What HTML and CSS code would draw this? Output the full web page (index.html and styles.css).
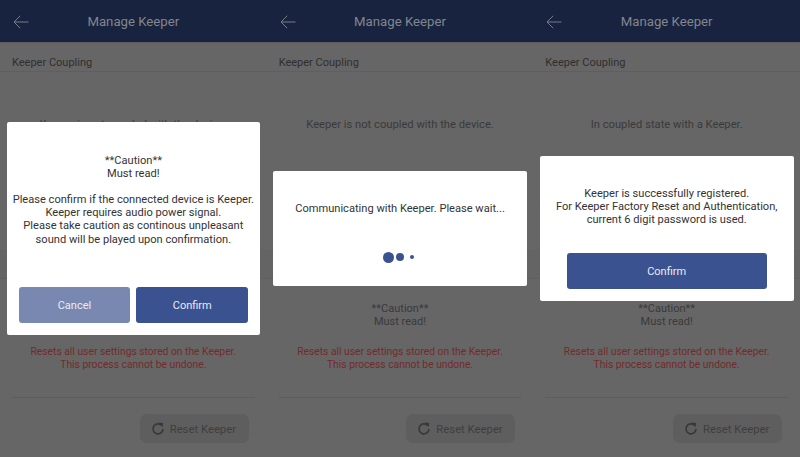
FILE: index.html
```html
<!DOCTYPE html>
<html lang="en">
<head>
<meta charset="utf-8">
<title>Manage Keeper</title>
<link rel="stylesheet" href="styles.css">
</head>
<body>
<main class="screens">
  <section class="phone">
    <header class="topbar">
      <svg class="back" viewBox="0 0 16 14" width="16" height="14"><path d="M15.5 7H1M7.2 .8 1 7l6.2 6.2"/></svg>
      <h1>Manage Keeper</h1>
    </header>
    <h2 class="section-title">Keeper Coupling</h2>
    <p class="status">Keeper is not coupled with the device.</p>
    <div class="band"></div>
    <p class="caution">**Caution**<br>Must read!</p>
    <p class="warning">Resets all user settings stored on the Keeper.<br>This process cannot be undone.</p>
    <hr class="rule">
    <div class="actions">
      <button class="reset"><svg class="refresh" viewBox="0 0 14 14" width="14" height="14"><path d="M10.6 3.4A5 5 0 1 0 12 7"/><path class="fill" d="M7.6 .6 12 .9l-.3 4.4z"/></svg>Reset Keeper</button>
    </div>
    <div class="backdrop">
      <div class="modal modal-caution">
        <p class="modal-text">**Caution**<br>Must read!<br><br>Please confirm if the connected device is Keeper.<br>Keeper requires audio power signal.<br>Please take caution as continous unpleasant<br>sound will be played upon confirmation.</p>
        <div class="modal-buttons">
          <button class="btn btn-muted">Cancel</button>
          <button class="btn">Confirm</button>
        </div>
      </div>
    </div>
  </section>

  <section class="phone">
    <header class="topbar">
      <svg class="back" viewBox="0 0 16 14" width="16" height="14"><path d="M15.5 7H1M7.2 .8 1 7l6.2 6.2"/></svg>
      <h1>Manage Keeper</h1>
    </header>
    <h2 class="section-title">Keeper Coupling</h2>
    <p class="status">Keeper is not coupled with the device.</p>
    <div class="band"></div>
    <p class="caution">**Caution**<br>Must read!</p>
    <p class="warning">Resets all user settings stored on the Keeper.<br>This process cannot be undone.</p>
    <hr class="rule">
    <div class="actions">
      <button class="reset"><svg class="refresh" viewBox="0 0 14 14" width="14" height="14"><path d="M10.6 3.4A5 5 0 1 0 12 7"/><path class="fill" d="M7.6 .6 12 .9l-.3 4.4z"/></svg>Reset Keeper</button>
    </div>
    <div class="backdrop">
      <div class="modal modal-wait">
        <p class="modal-text">Communicating with Keeper. Please wait...</p>
        <div class="dots"><span class="dot dot-l"></span><span class="dot dot-m"></span><span class="dot dot-s"></span></div>
      </div>
    </div>
  </section>

  <section class="phone">
    <header class="topbar">
      <svg class="back" viewBox="0 0 16 14" width="16" height="14"><path d="M15.5 7H1M7.2 .8 1 7l6.2 6.2"/></svg>
      <h1>Manage Keeper</h1>
    </header>
    <h2 class="section-title">Keeper Coupling</h2>
    <p class="status">In coupled state with a Keeper.</p>
    <div class="band"></div>
    <p class="caution">**Caution**<br>Must read!</p>
    <p class="warning">Resets all user settings stored on the Keeper.<br>This process cannot be undone.</p>
    <hr class="rule">
    <div class="actions">
      <button class="reset"><svg class="refresh" viewBox="0 0 14 14" width="14" height="14"><path d="M10.6 3.4A5 5 0 1 0 12 7"/><path class="fill" d="M7.6 .6 12 .9l-.3 4.4z"/></svg>Reset Keeper</button>
    </div>
    <div class="backdrop">
      <div class="modal modal-done">
        <p class="modal-text">Keeper is successfully registered.<br>For Keeper Factory Reset and Authentication,<br>current 6 digit password is used.</p>
        <div class="modal-buttons modal-buttons-single">
          <button class="btn">Confirm</button>
        </div>
      </div>
    </div>
  </section>
</main>
</body>
</html>
```

FILE: styles.css
```css
* { box-sizing: border-box; }
html, body { margin: 0; height: 100%; }
body { background: #666; font-family: Roboto, "Liberation Sans", sans-serif; overflow: hidden; }

.screens { display: flex; width: 800px; height: 457px; }

.phone {
  position: relative;
  flex: 1 1 0;
  height: 457px;
  display: flex;
  flex-direction: column;
  background: #666;
  overflow: hidden;
}

.topbar {
  display: flex;
  align-items: center;
  justify-content: center;
  position: relative;
  flex: 0 0 42px;
  padding-top: 1px;
  background: #18233f;
  box-shadow: 0 1px 1px #5e5e5e;
}
.topbar h1 { margin: 0; font-size: 13.2px; font-weight: 400; color: #83868e; }
.back { position: absolute; left: 13px; top: 15px; fill: none; stroke: #777c88; stroke-width: 1; }

.section-title {
  margin: 0;
  flex: 0 0 30px;
  padding: 14px 12px 0;
  font-size: 11px;
  line-height: 13px;
  font-weight: 400;
  color: #2f2f2f;
  border-bottom: 1px solid #5f5f5f;
}

.status {
  margin: 46px 0 0;
  font-size: 11.2px;
  line-height: 13px;
  text-align: center;
  color: #3a3a3a;
}

.band {
  margin-top: 119px;
  flex: 0 0 29px;
  border-top: 1px solid #626262;
  border-bottom: 1px solid #5f5f5f;
  background: #646464;
}

.caution {
  margin: 23px 0 0;
  font-size: 11px;
  line-height: 13px;
  text-align: center;
  color: #3a3a3a;
}

.warning {
  margin: 18px 0 0;
  font-size: 10.3px;
  line-height: 12.5px;
  text-align: center;
  color: #752a2a;
}

.rule { margin: 26px 12px 0; width: auto; border: 0; border-top: 1px solid #5c5c5c; }

.actions { display: flex; justify-content: flex-end; padding: 16px 18px 0 0; }

.reset {
  display: flex;
  align-items: center;
  gap: 5px;
  width: 109px;
  height: 29px;
  padding: 1px 0 0 11px;
  border: 0;
  border-radius: 7px;
  background: #5e5e5e;
  font: 400 11.3px Roboto, "Liberation Sans", sans-serif;
  color: #3e3e3e;
}
.refresh { fill: none; stroke: #383838; stroke-width: 1.6; flex: none; }
.refresh .fill { fill: #383838; stroke: none; }

.backdrop {
  position: absolute;
  inset: 0;
  display: flex;
  align-items: center;
  padding: 0 6.5px;
}

.modal {
  width: 100%;
  display: flex;
  flex-direction: column;
  background: #fff;
  border-radius: 2px;
}
.modal-caution { height: 213px; padding-top: 32px; }
.modal-wait { height: 115px; padding-top: 31px; }
.modal-done { height: 145px; padding-top: 31px; }

.modal-text {
  margin: 0;
  font-size: 11.1px;
  line-height: 13.1px;
  text-align: center;
  color: #333;
}

.modal-buttons { display: flex; gap: 6px; margin-top: auto; padding: 0 12px 12px; }
.modal-buttons-single { padding: 0 27px 12px; }

.btn {
  flex: 1 1 0;
  height: 36px;
  padding: 1px 0 0;
  border: 0;
  border-radius: 3px;
  background: #3b5290;
  color: #e8ecf5;
  font: 400 11px Roboto, "Liberation Sans", sans-serif;
}
.btn-muted { background: #7888b0; }

.dots { display: flex; align-items: center; justify-content: center; gap: 2px; margin-top: auto; padding: 0 4px 23px 0; height: 35px; }
.dot { display: block; border-radius: 50%; background: #3b5290; }
.dot-l { width: 11px; height: 11px; }
.dot-m { width: 8px; height: 8px; }
.dot-s { width: 4px; height: 4px; margin-left: 4px; }
```
